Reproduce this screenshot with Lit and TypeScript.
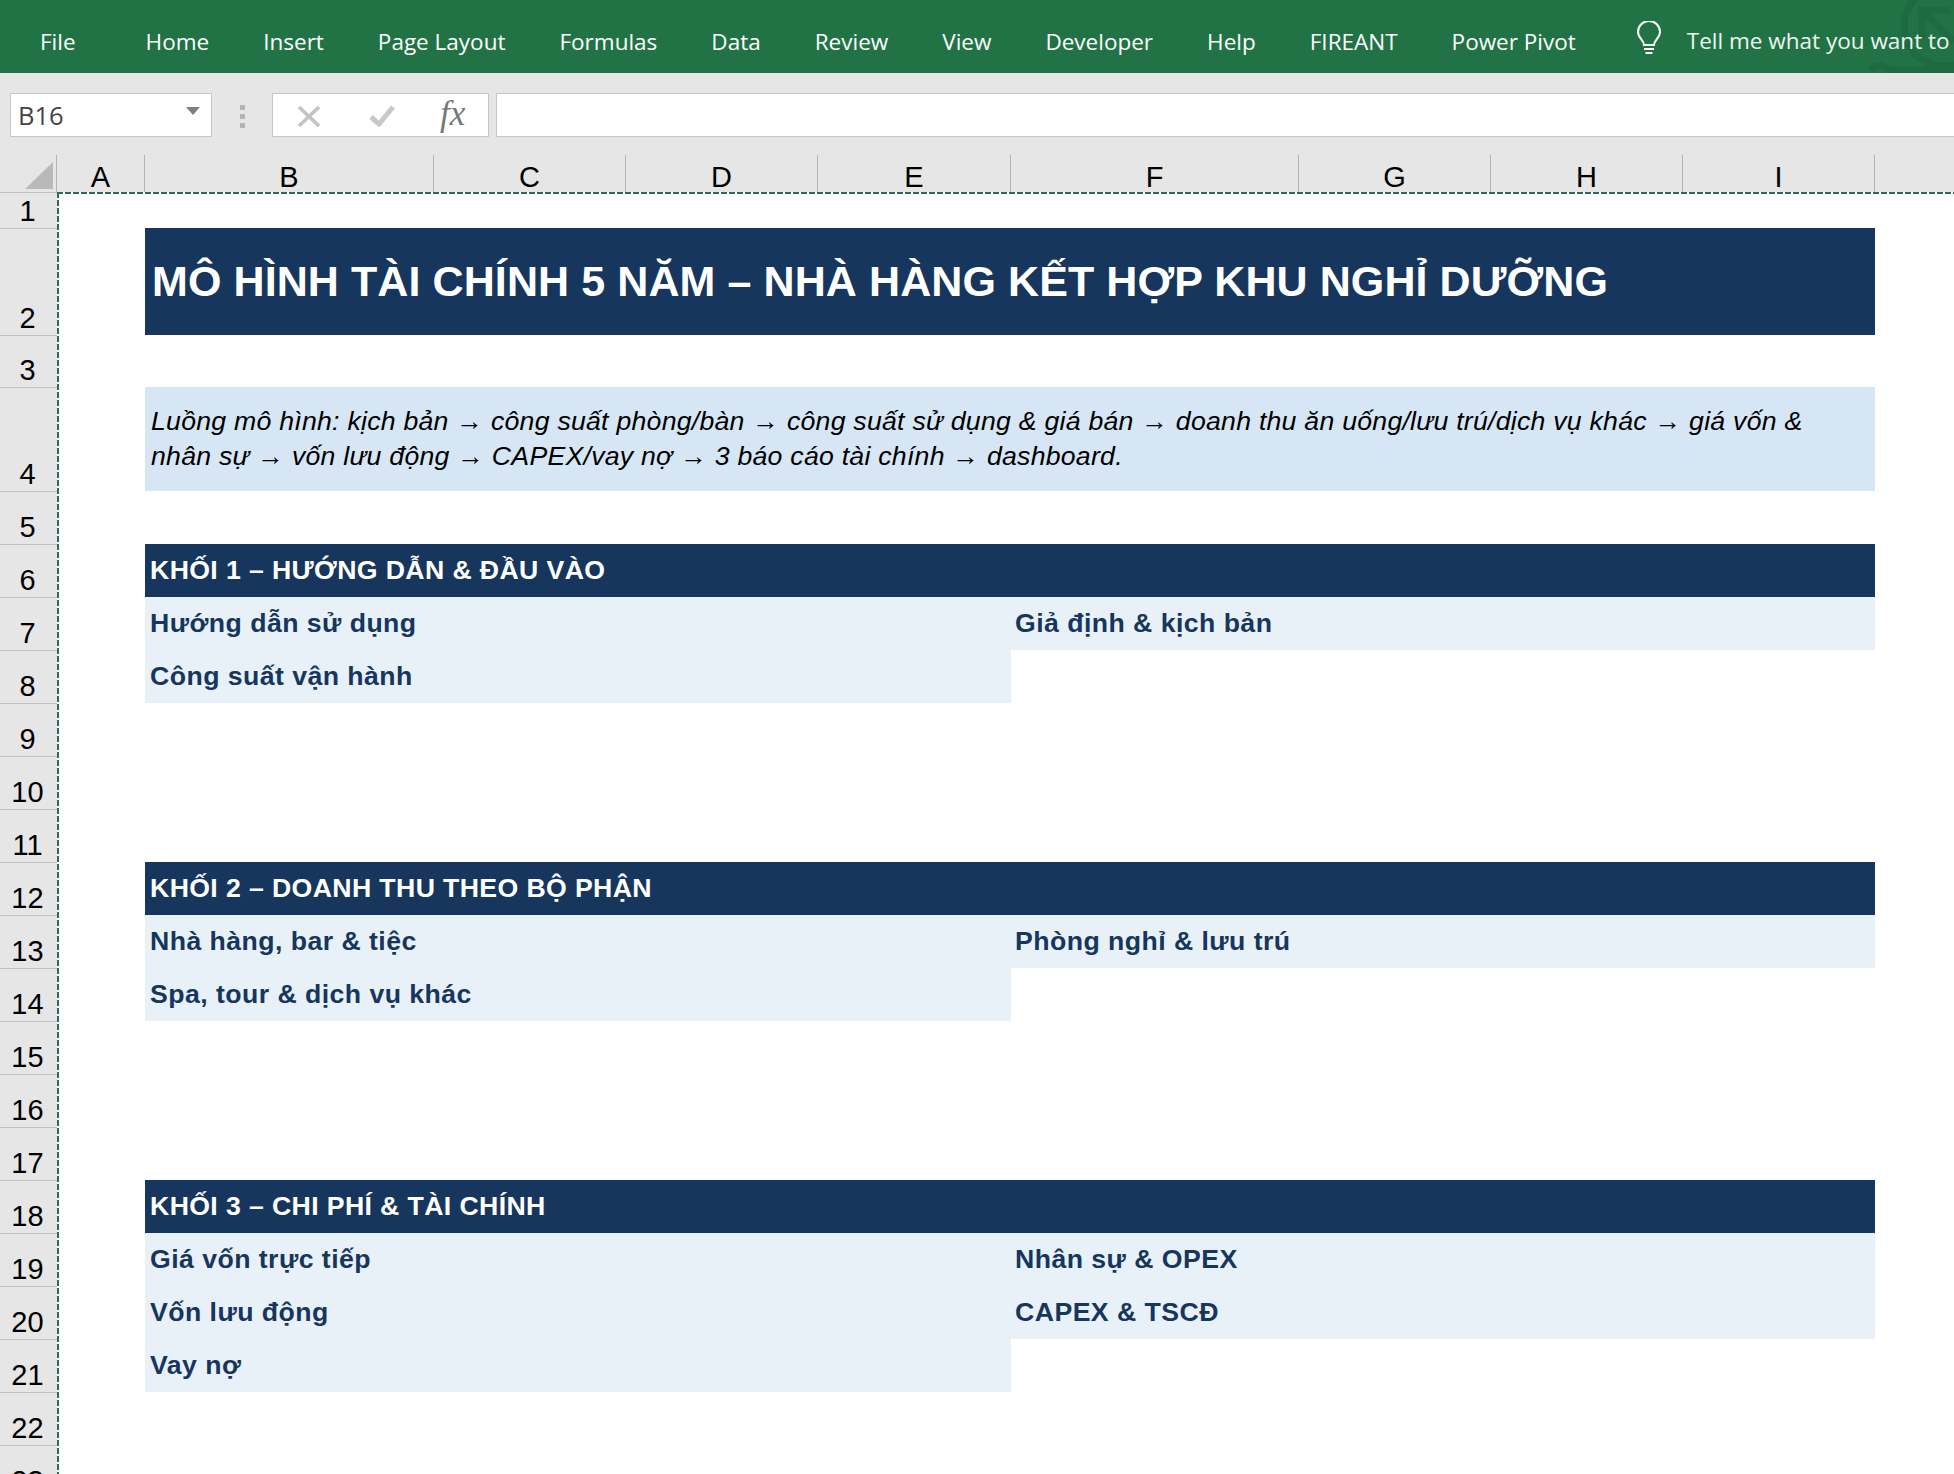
import { LitElement, html, css } from 'lit';
import { customElement } from 'lit/decorators.js';

const TABS = ['File', 'Home', 'Insert', 'Page Layout', 'Formulas', 'Data', 'Review', 'View', 'Developer', 'Help', 'FIREANT', 'Power Pivot'];
const COLUMNS = ['A', 'B', 'C', 'D', 'E', 'F', 'G', 'H', 'I', 'J'];
const ROW_HEIGHTS = [36, 107, 52, 104, 53, 53, 53, 53, 53, 53, 53, 53, 53, 53, 53, 53, 53, 53, 53, 53, 53, 53, 53];

interface Cell {
  row: number;
  kind: 'title' | 'note' | 'section' | 'left' | 'right';
  text: string;
}

const CELLS: Cell[] = [
  { row: 2, kind: 'title', text: 'MÔ HÌNH TÀI CHÍNH 5 NĂM – NHÀ HÀNG KẾT HỢP KHU NGHỈ DƯỠNG' },
  {
    row: 4,
    kind: 'note',
    text: 'Luồng mô hình: kịch bản → công suất phòng/bàn → công suất sử dụng & giá bán → doanh thu ăn uống/lưu trú/dịch vụ khác → giá vốn & nhân sự → vốn lưu động → CAPEX/vay nợ → 3 báo cáo tài chính → dashboard.',
  },
  { row: 6, kind: 'section', text: 'KHỐI 1 – HƯỚNG DẪN & ĐẦU VÀO' },
  { row: 7, kind: 'left', text: 'Hướng dẫn sử dụng' },
  { row: 7, kind: 'right', text: 'Giả định & kịch bản' },
  { row: 8, kind: 'left', text: 'Công suất vận hành' },
  { row: 12, kind: 'section', text: 'KHỐI 2 – DOANH THU THEO BỘ PHẬN' },
  { row: 13, kind: 'left', text: 'Nhà hàng, bar & tiệc' },
  { row: 13, kind: 'right', text: 'Phòng nghỉ & lưu trú' },
  { row: 14, kind: 'left', text: 'Spa, tour & dịch vụ khác' },
  { row: 18, kind: 'section', text: 'KHỐI 3 – CHI PHÍ & TÀI CHÍNH' },
  { row: 19, kind: 'left', text: 'Giá vốn trực tiếp' },
  { row: 19, kind: 'right', text: 'Nhân sự & OPEX' },
  { row: 20, kind: 'left', text: 'Vốn lưu động' },
  { row: 20, kind: 'right', text: 'CAPEX & TSCĐ' },
  { row: 21, kind: 'left', text: 'Vay nợ' },
];

@customElement('app-root')
export class AppRoot extends LitElement {
  static override styles = css`
    :host {
      display: block;
      width: 1954px;
      height: 1474px;
      overflow: hidden;
      background: #fff;
      --cols: 88px 289px 192px 192px 193px 288px 192px 192px 192px 192px;
    }

    .ribbon {
      position: relative;
      height: 73px;
      background: #217346;
      color: #fff;
      display: flex;
      align-items: center;
      padding: 10px 0 0 40px;
      box-sizing: border-box;
      font: 22.5px 'Open Sans', sans-serif;
      white-space: nowrap;
      overflow: hidden;
    }
    .tab { margin-right: 54px; }
    .tab:first-child { margin-right: 70px; }
    .bulb { width: 26px; height: 34px; margin: -8px 25px 0 6px; flex: none; }
    .tell { color: #eef5f0; margin-top: -2px; position: relative; z-index: 1; }
    .watermark { position: absolute; right: 0; top: 0; width: 94px; height: 73px; }

    .formula {
      height: 82px;
      box-sizing: border-box;
      padding-top: 20px;
      background: #e6e6e6;
      display: flex;
      align-items: flex-start;
    }
    .box {
      height: 44px;
      box-sizing: border-box;
      background: #fff;
      border: 1px solid #c6c6c6;
      display: flex;
      align-items: center;
    }
    .name {
      width: 202px;
      margin-left: 10px;
      padding: 0 11px 0 7px;
      justify-content: space-between;
      font: 25.5px 'Open Sans', sans-serif;
      color: #444;
    }
    .caret { width: 14px; height: 8px; margin-top: -8px; }
    .dots { width: 60px; display: flex; flex-direction: column; align-items: center; gap: 4px; padding-top: 12px; }
    .dots i { width: 5px; height: 5px; background: #b4b4b4; }
    .fx-box { width: 217px; position: relative; }
    .fx-box svg { position: absolute; }
    .fx-x { left: 25px; top: 12px; width: 22px; height: 21px; }
    .fx-ok { left: 96px; top: 11px; width: 26px; height: 22px; }
    .fx {
      position: absolute;
      left: 167px;
      top: 0;
      font: italic 35px 'Liberation Serif', serif;
      color: #777;
    }
    .input { flex: 1; margin-left: 7px; border-right: 0; }

    .col-head {
      height: 37px;
      background: #e6e6e6;
      display: flex;
    }
    .corner { width: 57px; flex: none; position: relative; box-sizing: border-box; border-right: 1px solid #b5b5b5; }
    .corner svg { position: absolute; left: 25px; top: 7px; width: 28px; height: 27px; }
    .cols { display: grid; grid-template-columns: var(--cols); }
    .col {
      box-sizing: border-box;
      border-right: 1px solid #b5b5b5;
      text-align: center;
      font: 29px/44px 'Liberation Sans', Arial, sans-serif;
      color: #000;
      height: 37px;
    }

    .body { display: flex; position: relative; }
    .rows { width: 57px; flex: none; background: #e6e6e6; display: grid; }
    .row-num {
      box-sizing: border-box;
      border-top: 1px solid #c0c0c0;
      display: flex;
      align-items: flex-end;
      justify-content: center;
      padding-right: 2px;
      font: 29px/33px 'Liberation Sans', Arial, sans-serif;
      color: #000;
    }
    .sheet {
      flex: 1;
      display: grid;
      grid-template-columns: var(--cols);
      font-family: 'Liberation Sans', Arial, sans-serif;
      position: relative;
    }
    .ants-top,
    .ants-left { position: absolute; left: 0; top: 0; z-index: 1; }
    .ants-top {
      width: 100%;
      height: 2px;
      background: repeating-linear-gradient(90deg, #2f6b50 0 6px, #fff 6px 8px);
    }
    .ants-left {
      width: 2px;
      height: 100%;
      background: repeating-linear-gradient(180deg, #2f6b50 0 6px, #fff 6px 8px);
    }

    .cell { display: flex; align-items: center; box-sizing: border-box; }
    .title {
      grid-column: 2 / 10;
      background: #17365d;
      color: #fff;
      font-weight: 700;
      font-size: 43px;
      letter-spacing: 0.09px;
      padding-left: 7px;
    }
    .note {
      grid-column: 2 / 10;
      background: #d6e6f4;
      color: #000;
      font-style: italic;
      font-size: 26.67px;
      letter-spacing: 0.25px;
      line-height: 35px;
      padding: 0 40px 0 6px;
    }
    .arrow { font: normal 26.67px 'Liberation Serif', serif; }
    .section {
      grid-column: 2 / 10;
      background: #17365d;
      color: #fff;
      font-weight: 700;
      font-size: 26.67px;
      letter-spacing: 0.38px;
      padding-left: 5px;
    }
    .left,
    .right {
      background: #e8f1f8;
      color: #17365d;
      font-weight: 700;
      font-size: 26.67px;
      letter-spacing: 0.45px;
      padding-left: 5px;
    }
    .left { grid-column: 2 / 6; }
    .right { grid-column: 6 / 10; padding-left: 4px; }
  `;

  // the arrows in the note line come from a different face than the italic text
  private renderText(text: string) {
    const parts = text.split('→');
    return parts.map((p, i) => (i === 0 ? p : html`<span class="arrow">→</span>${p}`));
  }

  override render() {
    const rowTemplate = ROW_HEIGHTS.map((h) => `${h}px`).join(' ');
    return html`
      <div class="ribbon">
        ${TABS.map((t) => html`<span class="tab">${t}</span>`)}
        <svg class="bulb" viewBox="0 0 26 34" fill="none" stroke="#fff" stroke-width="2">
          <path d="M8 24c0-5-6-7-6-13a11 11 0 0 1 22 0c0 6-6 8-6 13z" />
          <path d="M8 28h10M9.500 32h7" />
        </svg>
        <span class="tell">Tell me what you want to do</span>
        <svg class="watermark" viewBox="0 0 94 73" fill="none" stroke="#1e6a41" stroke-width="7">
          <circle cx="84" cy="26" r="40" />
          <path d="M62 38V10h28M62 10l32 32" />
          <path d="M10 70c4-6 14-6 18 0h66" />
        </svg>
      </div>

      <div class="formula">
        <div class="box name">
          B16
          <svg class="caret" viewBox="0 0 14 8"><path d="M0 0h14l-7 8z" fill="#7f7f7f" /></svg>
        </div>
        <div class="dots"><i></i><i></i><i></i></div>
        <div class="box fx-box">
          <svg class="fx-x" viewBox="0 0 22 21" fill="none" stroke="#c4c4c4" stroke-width="3.500">
            <path d="M1 1l20 19M21 1L1 20" />
          </svg>
          <svg class="fx-ok" viewBox="0 0 26 22" fill="none" stroke="#c8c8c8" stroke-width="5">
            <path d="M2 12l8 7L24 2" />
          </svg>
          <span class="fx">fx</span>
        </div>
        <div class="box input"></div>
      </div>

      <div class="col-head">
        <div class="corner">
          <svg viewBox="0 0 28 27"><path d="M28 0v27H0z" fill="#b9b9b9" /></svg>
        </div>
        <div class="cols">${COLUMNS.map((c) => html`<div class="col">${c}</div>`)}</div>
      </div>

      <div class="body">
        <div class="rows" style="grid-template-rows:${rowTemplate}">
          ${ROW_HEIGHTS.map((_, i) => html`<div class="row-num">${i + 1}</div>`)}
        </div>
        <div class="sheet" style="grid-template-rows:${rowTemplate}">
          <div class="ants-top"></div>
          <div class="ants-left"></div>
          ${CELLS.map((c) => html`<div class="cell ${c.kind}" style="grid-row:${c.row}"><span>${this.renderText(c.text)}</span></div>`)}
        </div>
      </div>
    `;
  }
}
